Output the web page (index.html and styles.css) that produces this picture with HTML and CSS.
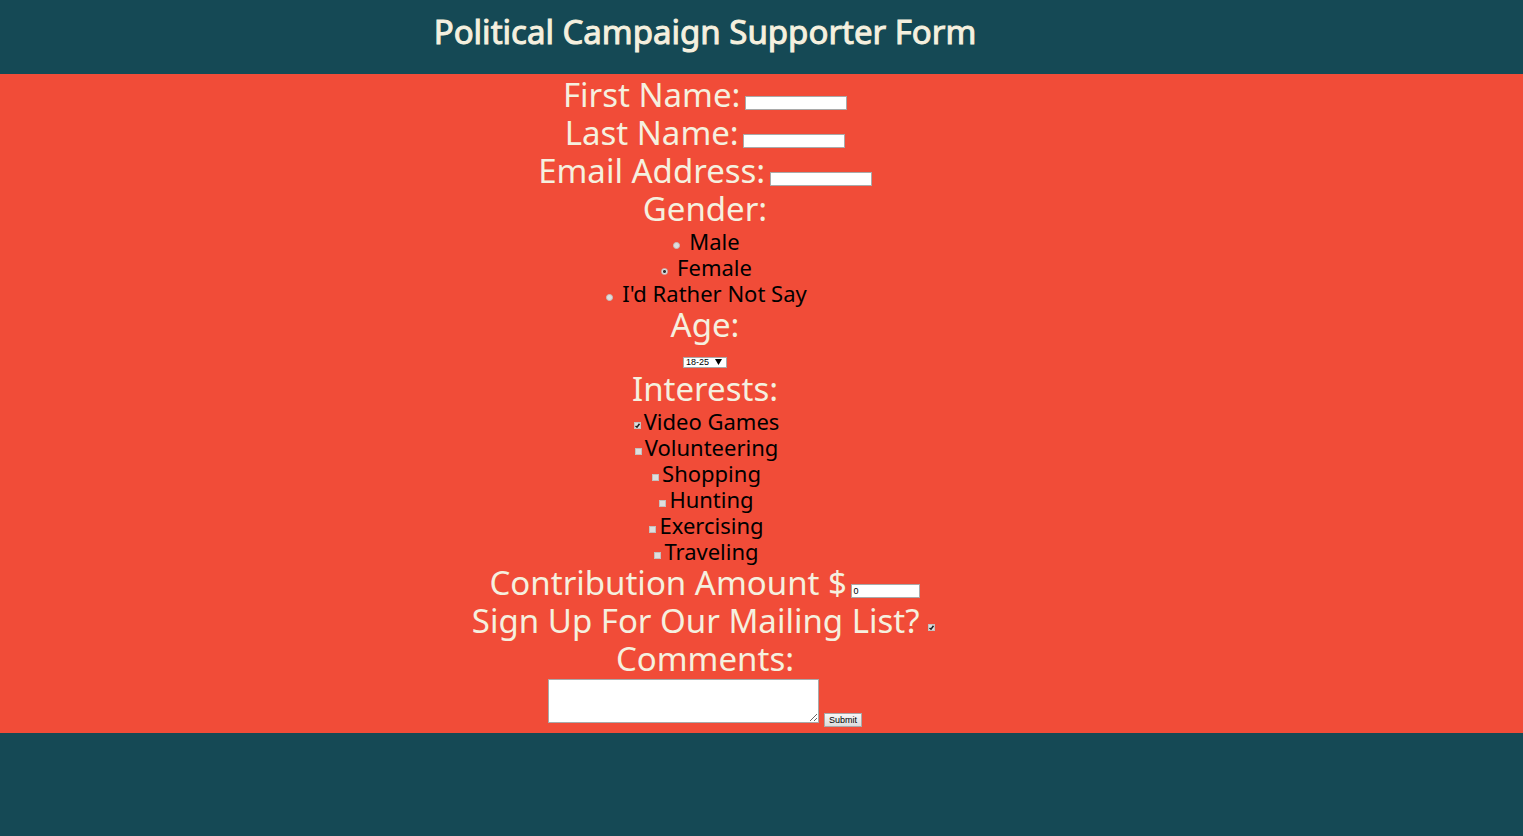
FILE: index.html
```html
<!DOCTYPE html>
<html lang="en">
<head>
<meta charset="utf-8">
<title>Political Campaign Supporter Form</title>
<link rel="stylesheet" href="styles.css">
</head>
<body>
<header class="banner">
  <h1 class="title">Political Campaign Supporter Form</h1>
</header>
<main class="panel">
  <form class="form">
    <div class="question"><label for="first">First Name:</label> <input class="field" id="first" type="text"></div>
    <div class="question"><label for="last">Last Name:</label> <input class="field" id="last" type="text"></div>
    <div class="question"><label for="email">Email Address:</label> <input class="field" id="email" type="email"></div>

    <div role="radiogroup" aria-labelledby="gender-label">
      <div class="question" id="gender-label">Gender:</div>
      <div class="option"><input class="radio" type="radio" name="gender" id="male"><label for="male">Male</label></div>
      <div class="option"><input class="radio" type="radio" name="gender" id="female" checked><label for="female">Female</label></div>
      <div class="option"><input class="radio" type="radio" name="gender" id="unsaid"><label for="unsaid">I'd Rather Not Say</label></div>
    </div>

    <div class="question"><label for="age">Age:</label></div>
    <div class="age-row">
      <div class="select-box">
        <select class="select" id="age">
          <option>18-25</option>
          <option>26-35</option>
          <option>36-50</option>
          <option>51+</option>
        </select>
        <svg class="arrow" viewBox="0 0 7 6" aria-hidden="true"><path d="M0 0h7L3.500 6z"/></svg>
      </div>
    </div>

    <div role="group" aria-labelledby="interests-label">
      <div class="question" id="interests-label">Interests:</div>
      <div class="option"><input class="check" type="checkbox" id="games" checked><label for="games">Video Games</label></div>
      <div class="option"><input class="check" type="checkbox" id="volunteering"><label for="volunteering">Volunteering</label></div>
      <div class="option"><input class="check" type="checkbox" id="shopping"><label for="shopping">Shopping</label></div>
      <div class="option"><input class="check" type="checkbox" id="hunting"><label for="hunting">Hunting</label></div>
      <div class="option"><input class="check" type="checkbox" id="exercising"><label for="exercising">Exercising</label></div>
      <div class="option"><input class="check" type="checkbox" id="traveling"><label for="traveling">Traveling</label></div>
    </div>

    <div class="question"><label for="amount">Contribution Amount $</label> <input class="field field-amount" id="amount" type="text" inputmode="numeric" value="0"></div>
    <div class="question"><label for="mailing">Sign Up For Our Mailing List?</label> <input class="check" type="checkbox" id="mailing" checked></div>
    <div class="question"><label for="comments">Comments:</label></div>
    <div class="send-row">
      <textarea class="comments" id="comments"></textarea>
      <button class="submit" type="submit">Submit</button>
    </div>
  </form>
</main>
</body>
</html>
```
FILE: styles.css
```css
* {
  box-sizing: border-box;
}

body {
  margin: 0;
  background: #154955;
  font-family: "Noto Sans", sans-serif;
  text-align: center;
}

.banner,
.panel {
  padding-right: 113px;
}

.banner {
  padding-top: 10px;
  padding-bottom: 20px;
}

.title {
  margin: 0;
  color: #f5f0df;
  font-size: 33px;
  font-weight: 400;
  line-height: 44px;
  -webkit-text-stroke: 1px #f5f0df;
}

.panel {
  padding-top: 2px;
  background: #f14c38;
}

.question {
  color: #f5f0df;
  font-size: 33px;
  line-height: 38px;
}

.option {
  color: #000;
  font-size: 22px;
  line-height: 26px;
}

.field,
.select,
.comments,
.submit {
  margin: 0;
  border: 1px solid #a9a9a9;
  border-radius: 0;
  background: #fff;
  color: #000;
  font-family: "Liberation Sans", Arial, sans-serif;
  font-size: 9px;
}

.field {
  width: 102px;
  height: 14px;
  padding: 0 1px;
  vertical-align: 1px;
}

.field-amount {
  width: 69px;
}

.question .field,
.question .check {
  margin-left: -4px;
}

.radio,
.check {
  appearance: none;
  width: 7px;
  height: 7px;
  margin: 0 3px 1px;
  background: #dedede;
  border: 1px solid #c4c0be;
}

.radio {
  margin-right: 9px;
  border-radius: 50%;
}

.radio:checked {
  background: radial-gradient(circle, #333 0 1px, #dedede 2px);
}

.check:checked {
  background: #dedede url("data:image/svg+xml,%3Csvg xmlns='http://www.w3.org/2000/svg' viewBox='0 0 7 7'%3E%3Cpath d='M1.500 4L3 5.200L5.500 1.800' fill='none' stroke='%23222' stroke-width='1.600'/%3E%3C/svg%3E") center / 7px 7px no-repeat border-box;
}

.question .check {
  margin-left: 0;
  vertical-align: 1px;
}

.age-row {
  display: flex;
  justify-content: center;
  padding: 13px 0 2px;
}

.select-box {
  position: relative;
  display: flex;
}

.select {
  appearance: none;
  width: 44px;
  height: 11px;
  padding: 0 2px;
  line-height: 9px;
}

.arrow {
  position: absolute;
  top: 2px;
  right: 5px;
  width: 7px;
  height: 6px;
  pointer-events: none;
}

.send-row {
  display: flex;
  justify-content: center;
  align-items: flex-end;
  gap: 5px;
  padding: 1px 0 6px;
}

.comments {
  width: 271px;
  height: 44px;
  margin-bottom: 4px;
  padding: 1px;
}

.submit {
  width: 38px;
  height: 14px;
  padding: 0;
  background: linear-gradient(#f6f6f6, #dcdcdc);
  line-height: 12px;
}
```
